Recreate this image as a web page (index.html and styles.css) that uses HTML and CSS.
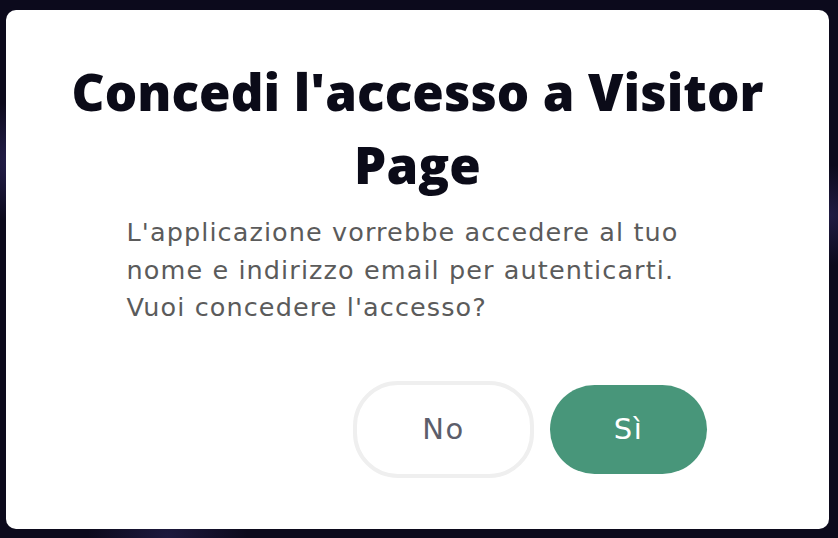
FILE: index.html
```html
<!DOCTYPE html>
<html>
<head>
    <title>Concedi l'accesso</title>
    <link rel="stylesheet" href="styles.css">
</head>
<body>
    <div class="backdrop">
        <div class="dialog">
            <h1 class="dialog-title">Concedi l'accesso a Visitor Page</h1>
            <p class="dialog-text">L'applicazione vorrebbe accedere al tuo nome e indirizzo email per autenticarti. Vuoi concedere l'accesso?</p>
            <div class="dialog-actions">
                <button class="btn btn-no">No</button>
                <button class="btn btn-yes">Sì</button>
            </div>
        </div>
    </div>
</body>
</html>
```

FILE: styles.css
```css
body {
    margin: 0;
    font-family: "DejaVu Sans", "Open Sans", sans-serif;
    background-color: #0c0a1c;
}

.backdrop {
    box-sizing: border-box;
    height: 100vh;
    padding: 10px 9px 9px 6px;
    background:
        radial-gradient(circle at 2% 30%, rgba(70, 60, 140, 0.45), transparent 60px),
        radial-gradient(circle at 99% 40%, rgba(70, 60, 140, 0.35), transparent 50px),
        radial-gradient(circle at 20% 100%, rgba(70, 60, 140, 0.3), transparent 80px),
        #0c0a1c;
}

.dialog {
    box-sizing: border-box;
    height: 100%;
    background-color: #fff;
    border-radius: 10px;
    padding-top: 45px;
    display: flex;
    flex-direction: column;
    align-items: center;
}

.dialog-title {
    width: 720px;
    margin: 0;
    font-family: "Open Sans", "DejaVu Sans", sans-serif;
    font-size: 51px;
    line-height: 73px;
    font-weight: 800;
    letter-spacing: 0.1px;
    text-align: center;
    color: #0b0b18;
}

.dialog-text {
    width: 582px;
    margin: 13px 0 0 0;
    font-size: 25.5px;
    line-height: 37.5px;
    letter-spacing: 1.1px;
    color: #5b5b5b;
}

.dialog-actions {
    width: 579px;
    margin-top: 54px;
    display: flex;
    justify-content: flex-end;
    align-items: center;
    gap: 16px;
}

.btn {
    height: 89px;
    padding: 0;
    border: none;
    border-radius: 45px;
    font-family: "DejaVu Sans", "Open Sans", sans-serif;
    font-size: 29px;
    letter-spacing: 1.5px;
    cursor: pointer;
}

.btn-no {
    box-sizing: content-box;
    width: 173px;
    background-color: #fff;
    border: 4px solid #efefef;
    color: #5c5e6b;
}

.btn-yes {
    width: 157px;
    background-color: #48967a;
    color: #fff;
}
```
